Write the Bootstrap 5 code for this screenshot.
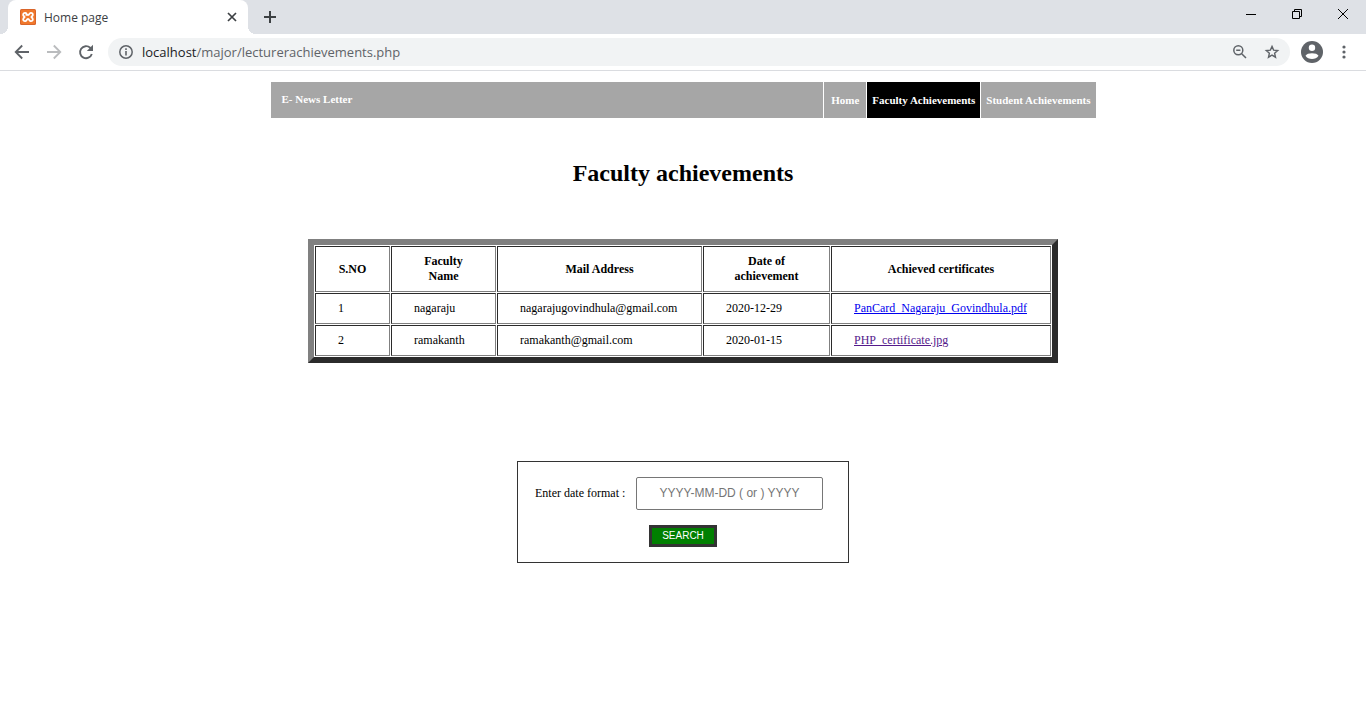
<!DOCTYPE html>
<html lang="en">
<head>
<meta charset="utf-8">
<meta name="viewport" content="width=device-width, initial-scale=1">
<title>Home page</title>
<link href="https://cdn.jsdelivr.net/npm/bootstrap@5.3.0/dist/css/bootstrap.min.css" rel="stylesheet">
<style>
  body { font: 12px/15px "Liberation Serif", "Times New Roman", serif; color: #000; background: #fff; }
  button { font-family: inherit; }
  svg { display: block; flex: none; }
  .browser { font-family: "Open Sans", "Noto Sans", sans-serif; color: #5f6368; }
  .tab-strip { height: 34px; background: #dee1e6; padding-left: 8px; }
  .tab { position: relative; width: 240px; height: 34px; padding: 0 10px 0 12px; background: #fff; border-radius: 8px 8px 0 0; font-size: 12px; color: #3c4043; }
  .tab::before, .tab::after { content: ""; position: absolute; bottom: 0; width: 8px; height: 8px; }
  .tab::before { left: -8px; background: radial-gradient(circle at 0 0, transparent 8px, #fff 8px); }
  .tab::after { right: -8px; background: radial-gradient(circle at 100% 0, transparent 8px, #fff 8px); }
  .tool { border: 0; background: none; padding: 0; display: flex; align-items: center; justify-content: center; flex: none; color: inherit; }
  .win { width: 46px; height: 28px; color: #000; }
  .toolbar { height: 37px; border-bottom: 1px solid #dadce0; padding: 0 6px 1px; }
  .toolbar > .tool { width: 32px; height: 32px; }
  .address { height: 28px; margin: 0 6px; padding: 0 10px; border-radius: 14px; background: #f1f3f4; }
  .url { font-size: 13px; line-height: 20px; }
  .url b { font-weight: 400; color: #202124; }
  .site-nav { max-width: 825px; height: 36px; margin: 11px auto 0; background: #a6a6a6; font-size: 11px; line-height: 16px; font-weight: 700; }
  .site-nav a { color: #fff; text-decoration: none; }
  .site-brand { padding: 9px 11px; }
  .site-links a { display: block; height: 36px; padding: 10px 5px; border-left: 1px solid #fff; }
  .site-links li:first-child a { padding-left: 7px; padding-right: 7px; }
  .site-links a.active { background: #000; }
  h1 { font-size: 24px; font-weight: 700; line-height: 28px; margin: 41px 0 52px; }
  .achievements { width: 750px; margin: 0 auto; border: 6px solid; border-color: #808080 #2b2b2b #2b2b2b #808080; border-collapse: separate; border-spacing: 1px; table-layout: fixed; }
  .achievements th, .achievements td { border: 1px solid; border-color: #2b2b2b #808080 #808080 #2b2b2b; padding: 7px 22px; }
  .achievements th { text-align: center; }
  .achievements td { height: 31px; white-space: nowrap; }
  .achievements thead tr { height: 46px; }
  .c-no { width: 75px; } .c-name { width: 105px; } .c-mail { width: 205px; } .c-date { width: 127px; }
  .achievements a { color: #0000ee; }
  .achievements a.seen { color: #551a8b; }
  .search-box { width: 332px; margin: 98px auto 0; border: 1px solid #333; padding: 15px 17px; }
  .search-box input { width: 187px; height: 33px; border: 1px solid #767676; border-radius: 2px; padding: 0 2px 2px; font: 12px "Liberation Sans", Arial, sans-serif; text-align: center; }
  .search-box input::placeholder { color: #757575; }
  .search-btn { width: 68px; height: 22px; border: 3px solid #333; background: #008000; color: #fff; font: 10px/12px "Liberation Sans", Arial, sans-serif; padding: 0; margin-top: 15px; }
</style>
</head>
<body>
<header class="browser">
  <div class="tab-strip d-flex">
    <div class="tab d-flex align-items-center">
      <svg width="16" height="16" viewBox="0 0 16 16"><rect width="16" height="16" rx="1.500" fill="#d9652a"/><rect x="1" y="1" width="14" height="14" rx="1" fill="#f0782c"/><path d="M6.500 6.700C6.500 5 6.500 3.800 5.200 3.800C3.600 3.800 3 5 3.200 6.100C3.300 7.200 4.600 7.300 4.600 8C4.600 8.700 3.300 8.800 3.200 9.900C3 11 3.600 12.200 5.200 12.200C6.800 12.200 6.400 10 8 10S9.200 12.200 10.800 12.200C12.400 12.200 13 11 12.800 9.900C12.700 8.800 11.400 8.700 11.400 8C11.400 7.300 12.700 7.200 12.800 6.100C13 5 12.400 3.800 10.800 3.800C9.200 3.800 9.600 6 8 6S6.800 3.800 5.200 3.800" fill="none" stroke="#fff" stroke-width="1.800"/></svg>
      <span class="ms-2 me-auto">Home page</span>
      <button class="tool" type="button" aria-label="Close tab"><svg width="12" height="12" viewBox="0 0 12 12"><path d="M2 2L10 10M10 2L2 10" stroke="#3c4043" stroke-width="1.700"/></svg></button>
    </div>
    <button class="tool ms-3" type="button" aria-label="New tab"><svg width="12" height="12" viewBox="0 0 12 12"><path d="M6 0V12M0 6H12" stroke="#3c4043" stroke-width="2"/></svg></button>
    <div class="d-flex ms-auto">
      <button class="tool win" type="button" aria-label="Minimize"><svg width="10" height="10"><path d="M0 5.500H10" stroke="#000"/></svg></button>
      <button class="tool win" type="button" aria-label="Restore"><svg width="10" height="10"><path d="M.5 2.500H7.500V9.500H.5ZM2.500 2.500V.5H9.500V7.500H7.500" fill="none" stroke="#000"/></svg></button>
      <button class="tool win" type="button" aria-label="Close"><svg width="10" height="10"><path d="M0 0L10 10M10 0L0 10" stroke="#000"/></svg></button>
    </div>
  </div>
  <div class="toolbar d-flex align-items-center">
    <button class="tool" type="button" aria-label="Back"><svg width="16" height="16" viewBox="0 0 16 16"><path d="M15 8H2M8.200 1.500L1.700 8L8.200 14.500" fill="none" stroke="#5f6368" stroke-width="1.800"/></svg></button>
    <button class="tool" type="button" aria-label="Forward"><svg width="16" height="16" viewBox="0 0 16 16"><path d="M1 8H14M7.800 1.500L14.300 8L7.800 14.500" fill="none" stroke="#babcbe" stroke-width="1.800"/></svg></button>
    <button class="tool" type="button" aria-label="Reload"><svg width="16" height="16" viewBox="0 0 16 16"><path d="M13.800 10A6 6 0 1 1 12.200 3.800L13.500 5.200" fill="none" stroke="#5f6368" stroke-width="1.900"/><path d="M15 .8V7H8.800Z" fill="#5f6368"/></svg></button>
    <div class="address d-flex align-items-center flex-grow-1">
      <svg width="16" height="16" viewBox="0 0 16 16"><circle cx="8" cy="8" r="6.200" fill="none" stroke="#5f6368" stroke-width="1.500"/><path d="M8 7V11.500M8 4.300V5.900" stroke="#5f6368" stroke-width="1.600"/></svg>
      <span class="url ms-2 me-auto"><b>localhost</b>/major/lecturerachievements.php</span>
      <button class="tool" type="button" aria-label="Zoom"><svg width="16" height="16" viewBox="0 0 16 16"><circle cx="6.300" cy="6.200" r="4.500" fill="none" stroke="#5f6368" stroke-width="1.500"/><path d="M4.200 6.200H8.400M9.700 9.700L14 14" stroke="#5f6368" stroke-width="1.500"/></svg></button>
      <button class="tool ms-3" type="button" aria-label="Bookmark"><svg width="16" height="16" viewBox="0 0 16 16"><path d="M8 2.400L9.600 6.100L13.700 6.500L10.600 9.200L11.500 13.200L8 11.100L4.500 13.200L5.400 9.200L2.300 6.500L6.400 6.100Z" fill="none" stroke="#5f6368" stroke-width="1.400"/></svg></button>
    </div>
    <button class="tool" type="button" aria-label="Profile"><svg width="22" height="22" viewBox="0 0 22 22"><circle cx="11" cy="11" r="11" fill="#5f6368"/><circle cx="11" cy="6.800" r="3.200" fill="#fff"/><path d="M4.500 14.800C6 11.500 16 11.500 17.500 14.800C15 19.200 7 19.200 4.500 14.800Z" fill="#fff"/></svg></button>
    <button class="tool" type="button" aria-label="Menu"><svg width="4" height="14" fill="#5f6368"><circle cx="2" cy="2" r="1.600"/><circle cx="2" cy="7" r="1.600"/><circle cx="2" cy="12" r="1.600"/></svg></button>
  </div>
</header>

<nav class="site-nav d-flex justify-content-between">
  <a class="site-brand" href="#">E- News Letter</a>
  <ul class="site-links list-unstyled d-flex mb-0">
    <li><a href="#">Home</a></li>
    <li><a class="active" href="#" aria-current="page">Faculty Achievements</a></li>
    <li><a href="#">Student Achievements</a></li>
  </ul>
</nav>

<main>
  <h1 class="text-center">Faculty achievements</h1>
  <table class="achievements">
    <colgroup><col class="c-no"><col class="c-name"><col class="c-mail"><col class="c-date"><col></colgroup>
    <thead>
      <tr><th>S.NO</th><th>Faculty Name</th><th>Mail Address</th><th>Date of achievement</th><th>Achieved certificates</th></tr>
    </thead>
    <tbody>
      <tr><td>1</td><td>nagaraju</td><td>nagarajugovindhula@gmail.com</td><td>2020-12-29</td><td><a href="#">PanCard_Nagaraju_Govindhula.pdf</a></td></tr>
      <tr><td>2</td><td>ramakanth</td><td>ramakanth@gmail.com</td><td>2020-01-15</td><td><a class="seen" href="#">PHP_certificate.jpg</a></td></tr>
    </tbody>
  </table>
  <form class="search-box">
    <div class="d-flex align-items-center">
      <label for="date">Enter date format :</label>
      <input class="ms-auto me-2" id="date" type="text" placeholder="YYYY-MM-DD ( or ) YYYY">
    </div>
    <button class="search-btn d-block mx-auto" type="button">SEARCH</button>
  </form>
</main>
<script src="https://cdn.jsdelivr.net/npm/bootstrap@5.3.0/dist/js/bootstrap.bundle.min.js"></script>
</body>
</html>
